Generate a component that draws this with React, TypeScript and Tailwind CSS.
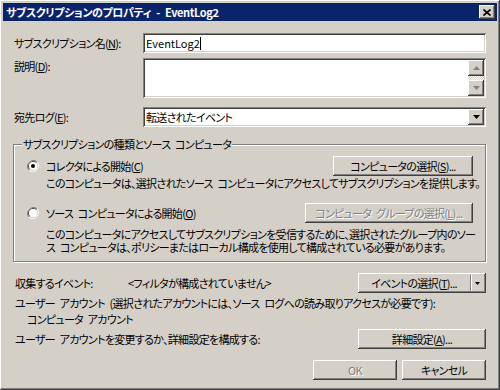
import React from "react";

const font = "font-['MS_UI_Gothic','Noto_Sans_CJK_JP',sans-serif] [font-feature-settings:'palt']";
const raised =
  "bg-[#d4d0c8] shadow-[inset_-1px_-1px_#404040,inset_1px_1px_#ffffff,inset_-2px_-2px_#808080,inset_2px_2px_#d4d0c8]";
const sunken =
  "bg-white shadow-[inset_1px_1px_#808080,inset_-1px_-1px_#ffffff,inset_2px_2px_#404040,inset_-2px_-2px_#d4d0c8]";

function U({ children }: { children: React.ReactNode }) {
  return <span className="underline underline-offset-1">{children}</span>;
}

function Button({
  children,
  className = "",
  disabled = false,
}: {
  children: React.ReactNode;
  className?: string;
  disabled?: boolean;
}) {
  return (
    <div
      className={`${raised} flex items-center justify-center h-[20px] whitespace-nowrap ${
        disabled ? "text-[#808080] [text-shadow:1px_1px_#ffffff]" : "text-black"
      } ${className}`}
    >
      {children}
    </div>
  );
}

function Radio({ checked }: { checked?: boolean }) {
  return (
    <svg width="12" height="12" viewBox="0 0 12 12" className="shrink-0">
      <path d="M10.2 1.8A6 6 0 0 0 1.8 10.2" fill="none" stroke="#808080" strokeWidth="1" />
      <path d="M1.8 10.2A6 6 0 0 0 10.2 1.8" fill="none" stroke="#ffffff" strokeWidth="1" />
      <path d="M9.5 2.5A5 5 0 0 0 2.5 9.5" fill="none" stroke="#404040" strokeWidth="1" />
      <path d="M2.5 9.5A5 5 0 0 0 9.5 2.5" fill="none" stroke="#d4d0c8" strokeWidth="1" />
      <circle cx="6" cy="6" r="4" fill="#ffffff" />
      {checked && <circle cx="6" cy="6" r="2" fill="#000000" />}
    </svg>
  );
}

function ScrollBtn({ dir }: { dir: "up" | "down" }) {
  return (
    <div className={`${raised} w-[16px] h-[16px] flex items-center justify-center`}>
      <svg width="7" height="4" viewBox="0 0 7 4">
        {dir === "up" ? (
          <path d="M3.5 0L7 4H0Z" fill="#808080" />
        ) : (
          <path d="M0 0H7L3.5 4Z" fill="#808080" />
        )}
      </svg>
    </div>
  );
}

export default function App() {
  return (
    <div
      className={`w-[500px] h-[390px] p-[3px] text-[11px] leading-[13px] tracking-[-0.7px] [word-spacing:3px] text-black whitespace-nowrap ${font} ${raised}`}
    >
      <div className="h-[18px] bg-[#0a246a] flex items-center justify-between pl-[3px] pr-[2px]">
        <span className="text-white font-bold text-[11px] tracking-[-0.4px]">
          サブスクリプションのプロパティ - EventLog2
        </span>
        <div className={`${raised} w-[16px] h-[14px] flex items-center justify-center`}>
          <svg width="8" height="7" viewBox="0 0 8 7">
            <path d="M0.5 0.5L7.5 6.5M7.5 0.5L0.5 6.5" stroke="#000" strokeWidth="1.6" />
          </svg>
        </div>
      </div>

      <div className="pl-[10px] pr-[11px] pt-[12px]">
        <div className="flex items-center h-[20px]">
          <div className="w-[130px] pl-[1px]">
            サブスクリプション名(<U>N</U>):
          </div>
          <div className={`${sunken} flex-1 h-[20px] flex items-center pl-[3px] tracking-normal`}>
            EventLog2<span className="w-px h-[13px] bg-black" />
          </div>
        </div>

        <div className="flex mt-[5px] h-[40px]">
          <div className="w-[130px] pl-[1px] pt-[2px]">
            説明(<U>D</U>):
          </div>
          <div className={`${sunken} flex-1 flex justify-end p-[2px]`}>
            <div className="w-[16px] flex flex-col">
              <ScrollBtn dir="up" />
              <div className="flex-1 bg-[repeating-conic-gradient(#ffffff_0_25%,#d4d0c8_0_50%)] bg-[length:2px_2px]" />
              <ScrollBtn dir="down" />
            </div>
          </div>
        </div>

        <div className="flex items-center mt-[9px] h-[20px]">
          <div className="w-[130px] pl-[1px]">
            宛先ログ(<U>E</U>):
          </div>
          <div className={`${sunken} flex-1 h-[20px] flex items-center justify-between pl-[3px] pr-[2px]`}>
            <span>転送されたイベント</span>
            <div className={`${raised} w-[16px] h-[16px] flex items-center justify-center`}>
              <svg width="7" height="4" viewBox="0 0 7 4">
                <path d="M0 0H7L3.5 4Z" fill="#000" />
              </svg>
            </div>
          </div>
        </div>

        <div className="relative mt-[17px] h-[118px] border border-[#808080] shadow-[inset_1px_1px_#ffffff,1px_1px_#ffffff] pt-[11px] pr-[12px]">
          <div className="absolute -top-[7px] left-[8px] bg-[#d4d0c8] px-px">
            サブスクリプションの種類とソース コンピュータ
          </div>
          <div className="flex items-center justify-between h-[20px]">
            <div className="flex items-center pl-[13px] gap-[7px]">
              <Radio checked />
              <span>
                コレクタによる開始(<U>C</U>)
              </span>
            </div>
            <Button className="w-[140px]">
              コンピュータの選択(<U>S</U>)...
            </Button>
          </div>
          <div className="pl-[32px] mt-[1px]">
            このコンピュータは、選択されたソース コンピュータにアクセスしてサブスクリプションを提供します。
          </div>
          <div className="flex items-center justify-between h-[20px] mt-[13px]">
            <div className="flex items-center pl-[13px] gap-[7px]">
              <Radio />
              <span>
                ソース コンピュータによる開始(<U>O</U>)
              </span>
            </div>
            <Button className="w-[168px]" disabled>
              コンピュータ グループの選択(<U>L</U>)...
            </Button>
          </div>
          <div className="pl-[32px] mt-[5px]">
            <div>このコンピュータにアクセスしてサブスクリプションを受信するために、選択されたグループ内のソー</div>
            <div>ス コンピュータは、ポリシーまたはローカル構成を使用して構成されている必要があります。</div>
          </div>
        </div>

        <div className="flex items-center justify-between h-[20px] mt-[11px] pl-[2px]">
          <div className="flex">
            <span className="w-[113px]">収集するイベント:</span>
            <span>&lt;フィルタが構成されていません&gt;</span>
          </div>
          <div className={`${raised} w-[128px] h-[20px] flex items-stretch`}>
            <div className="flex-1 flex items-center justify-center">
              イベントの選択(<U>T</U>)...
            </div>
            <div className="w-[14px] flex items-center justify-center border-l border-l-[#808080] shadow-[inset_1px_0_#ffffff] my-[2px] mr-[2px]">
              <svg width="5" height="3" viewBox="0 0 5 3">
                <path d="M0 0H5L2.5 3Z" fill="#000" />
              </svg>
            </div>
          </div>
        </div>

        <div className="mt-[4px] pl-[2px]">
          ユーザー アカウント (選択されたアカウントには、ソース ログへの読み取りアクセスが必要です):
        </div>
        <div className="mt-[3px] pl-[14px]">コンピュータ アカウント</div>

        <div className="flex items-center justify-between h-[20px] mt-[3px] pl-[2px]">
          <span>ユーザー アカウントを変更するか、詳細設定を構成する:</span>
          <Button className="w-[128px]">
            詳細設定(<U>A</U>)...
          </Button>
        </div>

        <div className="flex justify-end gap-[5px] mt-[11px]">
          <Button className="w-[84px]" disabled>
            OK
          </Button>
          <Button className="w-[84px]">キャンセル</Button>
        </div>
      </div>
    </div>
  );
}
